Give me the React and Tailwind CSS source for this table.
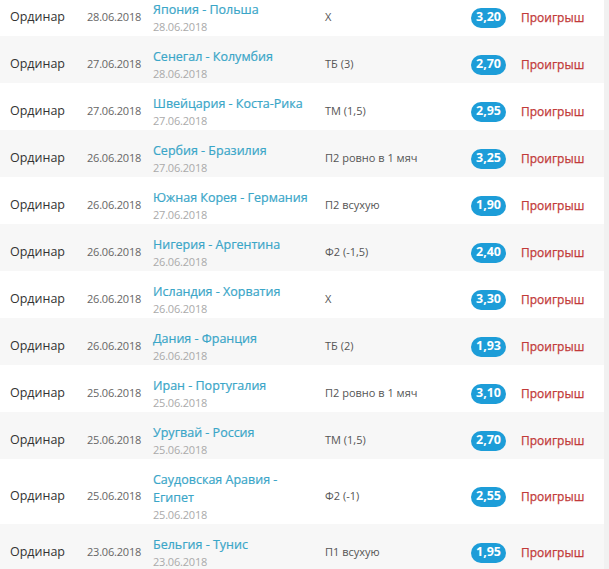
import React from "react";

const bets = [
  { date: "28.06.2018", match: "Япония - Польша", matchDate: "28.06.2018", type: "X", odds: "3,20" },
  { date: "27.06.2018", match: "Сенегал - Колумбия", matchDate: "28.06.2018", type: "ТБ (3)", odds: "2,70" },
  { date: "27.06.2018", match: "Швейцария - Коста-Рика", matchDate: "27.06.2018", type: "ТМ (1,5)", odds: "2,95" },
  { date: "26.06.2018", match: "Сербия - Бразилия", matchDate: "27.06.2018", type: "П2 ровно в 1 мяч", odds: "3,25" },
  { date: "26.06.2018", match: "Южная Корея - Германия", matchDate: "27.06.2018", type: "П2 всухую", odds: "1,90" },
  { date: "26.06.2018", match: "Нигерия - Аргентина", matchDate: "26.06.2018", type: "Ф2 (-1,5)", odds: "2,40" },
  { date: "26.06.2018", match: "Исландия - Хорватия", matchDate: "26.06.2018", type: "X", odds: "3,30" },
  { date: "26.06.2018", match: "Дания - Франция", matchDate: "26.06.2018", type: "ТБ (2)", odds: "1,93" },
  { date: "25.06.2018", match: "Иран - Португалия", matchDate: "25.06.2018", type: "П2 ровно в 1 мяч", odds: "3,10" },
  { date: "25.06.2018", match: "Уругвай - Россия", matchDate: "25.06.2018", type: "ТМ (1,5)", odds: "2,70" },
  { date: "25.06.2018", match: "Саудовская Аравия - Египет", matchDate: "25.06.2018", type: "Ф2 (-1)", odds: "2,55" },
  { date: "23.06.2018", match: "Бельгия - Тунис", matchDate: "23.06.2018", type: "П1 всухую", odds: "1,95" },
];

const App = () => {
  return (
    <div className="w-[609px] h-[569px] overflow-hidden bg-[#f1f1f1] font-['Open_Sans',sans-serif]">
      <div className="w-[604px] -mt-[11px]">
        {bets.map((bet, i) => (
          <div
            key={i}
            className={`flex items-center pt-[12px] pb-[2px] ${
              i % 2 === 0 ? "bg-white" : "bg-[#f7f7f7]"
            }`}
          >
            {/* type */}
            <div className="w-[87px] pl-[10px] text-[12.5px] text-[#333]">Ординар</div>

            {/* bet date */}
            <div className="w-[66px] text-[11px] text-[#666] tracking-[-0.2px]">{bet.date}</div>

            {/* match */}
            <div className="w-[172px] pr-[6px]">
              <div className="text-[12.5px] leading-[18px] text-[#3aa6c8] [-webkit-text-stroke:0.2px_#3aa6c8]">
                {bet.match}
              </div>
              <div className="text-[11px] leading-[15px] text-[#aaa] tracking-[-0.2px]">
                {bet.matchDate}
              </div>
            </div>

            {/* outcome */}
            <div className="w-[146px] text-[11px] text-[#555]">{bet.type}</div>

            {/* odds */}
            <span className="w-[35px] h-[20px] flex items-center justify-center rounded-full bg-[#1d9dd8] text-white text-[12.5px] font-bold">
              {bet.odds}
            </span>

            {/* result */}
            <div className="ml-[15px] text-[12px] text-[#c23a3a] [-webkit-text-stroke:0.25px_#c23a3a]">
              Проигрыш
            </div>
          </div>
        ))}
      </div>
    </div>
  );
};

export default App;
